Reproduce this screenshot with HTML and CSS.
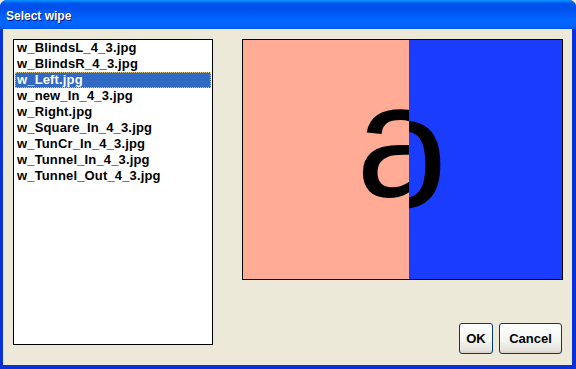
FILE: index.html
```html
<!DOCTYPE html>
<html lang="en">
<head>
    <meta charset="UTF-8">
    <title>Select wipe</title>
    <link rel="stylesheet" href="styles.css">
</head>
<body>
    <div class="window">
        <div class="titlebar">Select wipe</div>
        <div class="client">
            <ul class="list">
                <li>w_BlindsL_4_3.jpg</li>
                <li>w_BlindsR_4_3.jpg</li>
                <li class="selected">w_Left.jpg</li>
                <li>w_new_In_4_3.jpg</li>
                <li>w_Right.jpg</li>
                <li>w_Square_In_4_3.jpg</li>
                <li>w_TunCr_In_4_3.jpg</li>
                <li>w_Tunnel_In_4_3.jpg</li>
                <li>w_Tunnel_Out_4_3.jpg</li>
            </ul>
            <div class="side">
                <div class="preview">
                    <svg width="320" height="240" viewBox="0 0 320 240">
                        <defs>
                            <clipPath id="leftHalf"><rect x="0" y="0" width="166" height="240"/></clipPath>
                            <clipPath id="rightHalf"><rect x="166" y="0" width="154" height="240"/></clipPath>
                        </defs>
                        <rect x="0" y="0" width="166" height="240" fill="#ffab96"/>
                        <rect x="166" y="0" width="154" height="240" fill="#1a3cff"/>
                        <text class="glyph" x="113" y="156" clip-path="url(#leftHalf)">a</text>
                        <text class="glyph" x="159" y="167" text-anchor="middle" clip-path="url(#rightHalf)">o</text>
                    </svg>
                </div>
                <div class="buttons">
                    <button class="ok">OK</button>
                    <button class="cancel">Cancel</button>
                </div>
            </div>
        </div>
    </div>
</body>
</html>
```

FILE: styles.css
```css
body {
    margin: 0;
    font-family: "Liberation Sans", Arial, sans-serif;
    background: #ece9d8;
}
.window {
    width: 576px;
    height: 369px;
    box-sizing: border-box;
    display: flex;
    flex-direction: column;
    background: #0831d9;
    border-radius: 7px 7px 0 0;
    overflow: hidden;
}
.titlebar {
    height: 29px;
    flex: none;
    padding: 0 6px;
    line-height: 32px;
    color: white;
    font-size: 12px;
    font-weight: bold;
    text-shadow: 1px 1px #0f1089;
    background: linear-gradient(#0997ff 0%, #0053ee 12%, #0050ee 28%, #0066ff 70%, #0065ff 86%, #0058ec 100%);
}
.client {
    flex: 1;
    display: flex;
    margin: 0 4px 4px 3px;
    padding: 10px 9px 11px 10px;
    background: #ece9d8;
}
.list {
    list-style: none;
    margin: 0;
    padding: 0 1px;
    width: 198px;
    height: 304px;
    border: 1px solid black;
    background: white;
    font-size: 13px;
    font-weight: bold;
    letter-spacing: 0.15px;
}
.list li {
    height: 16px;
    line-height: 16px;
    padding-left: 2px;
    white-space: nowrap;
}
.list .selected {
    background: #316ac5;
    color: white;
    outline: 1px dotted #d8c890;
    outline-offset: -1px;
}
.side {
    flex: 1;
    display: flex;
    flex-direction: column;
    margin-left: 29px;
}
.preview {
    width: 319px;
    height: 239px;
    border: 1px solid black;
    overflow: hidden;
}
.preview svg {
    display: block;
}
.glyph {
    font-family: "Liberation Sans", Arial, sans-serif;
    font-size: 162px;
    fill: black;
}
.buttons {
    margin-top: auto;
    display: flex;
    justify-content: flex-end;
    gap: 6px;
    padding-right: 1px;
}
.buttons button {
    height: 31px;
    padding: 0;
    border: 1px solid #003c74;
    border-radius: 3px;
    background: linear-gradient(#ffffff 0%, #f3f3ef 60%, #e3e2da 90%, #d6d0c5 100%);
    font-family: "Liberation Sans", Arial, sans-serif;
    font-size: 13px;
    font-weight: bold;
    color: black;
}
.buttons .ok {
    width: 34px;
}
.buttons .cancel {
    width: 63px;
}
```
